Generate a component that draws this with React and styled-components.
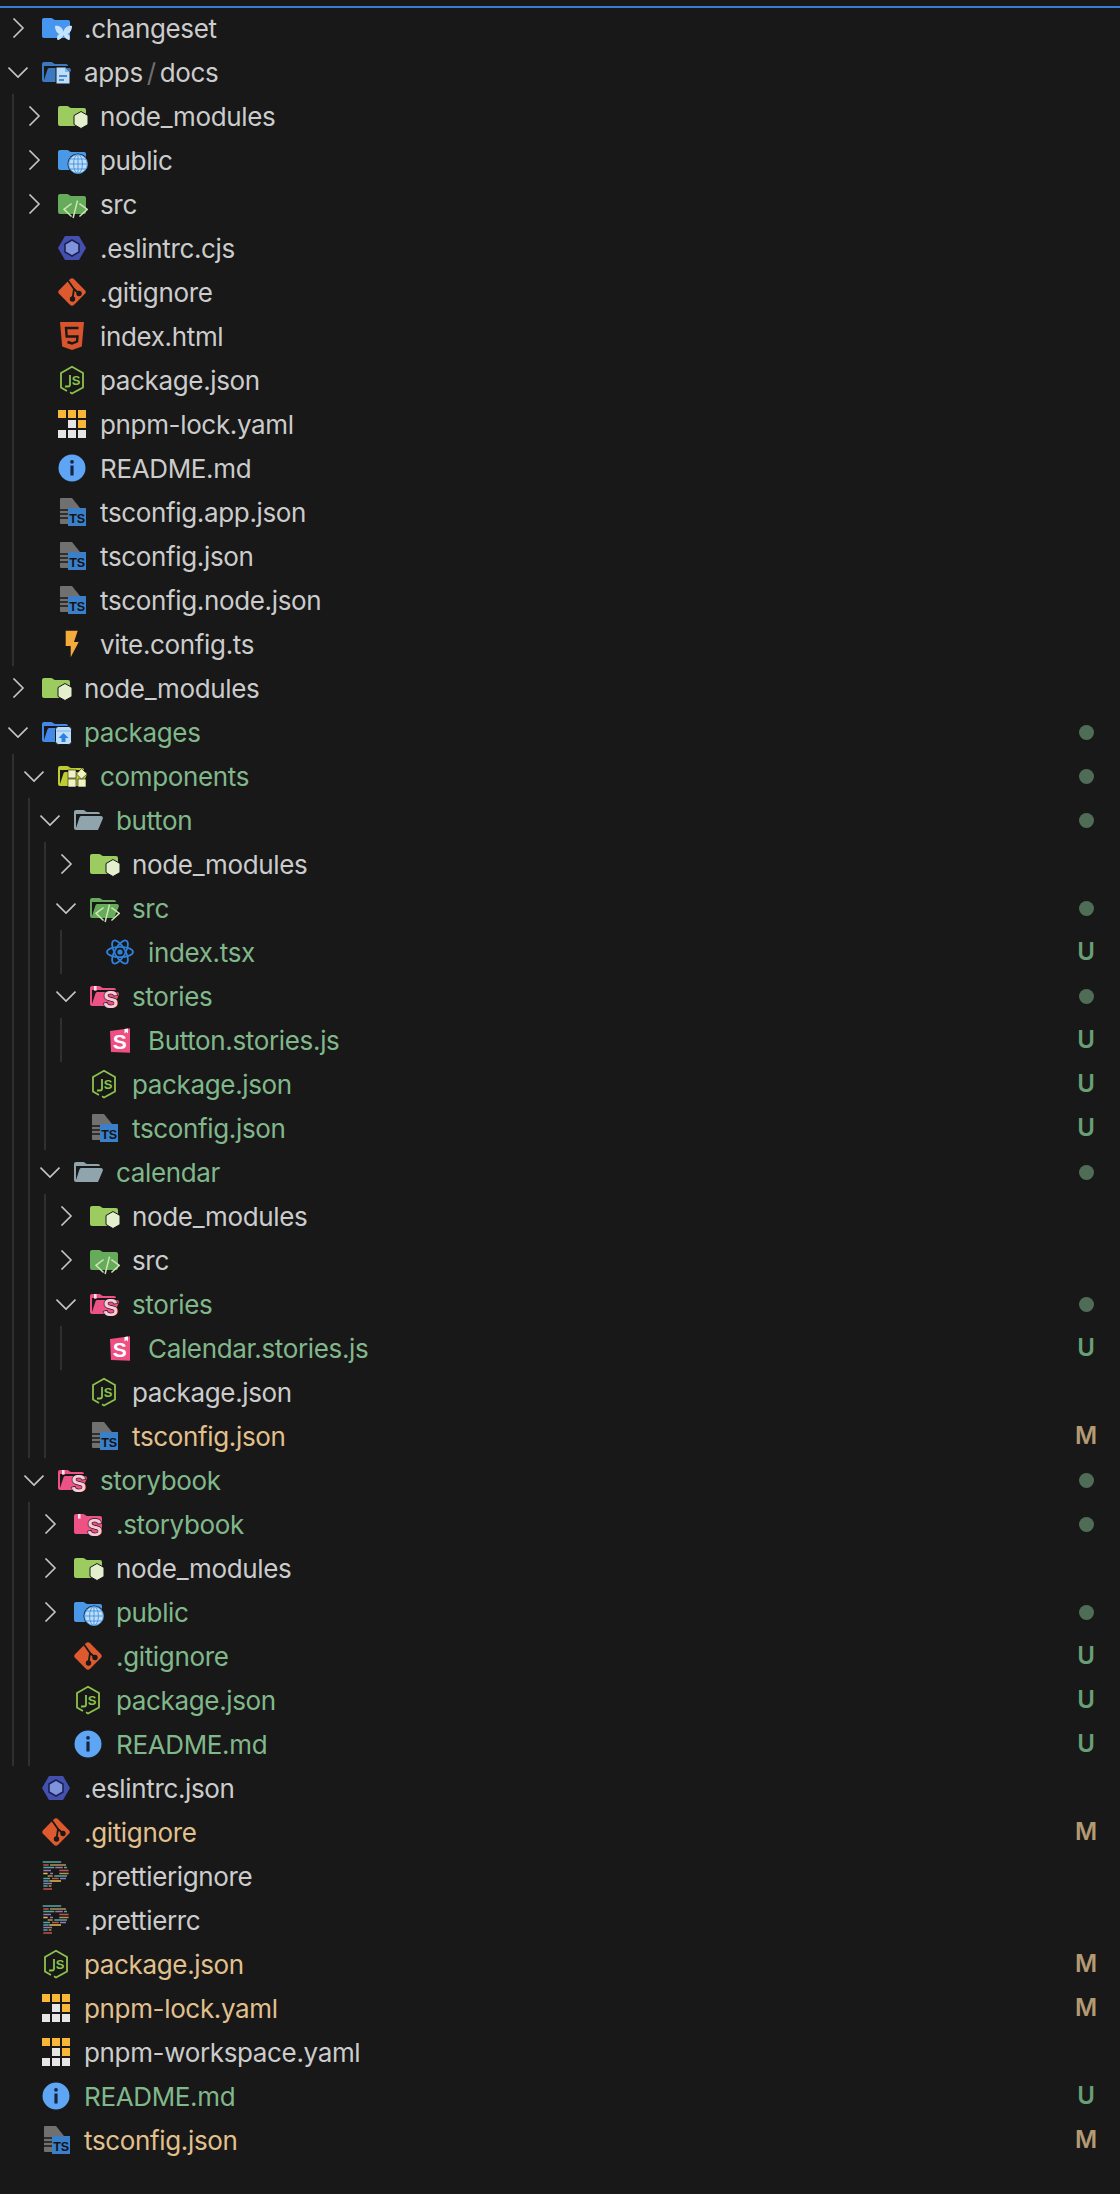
import React from "react";
import styled, { createGlobalStyle } from "styled-components";

const Global = createGlobalStyle`
  html, body { margin: 0; padding: 0; background: #181818; }
  #root { min-height: 2194px; }
`;

const Page = styled.div`
  position: relative;
  width: 1120px;
  min-height: 2194px;
  box-sizing: border-box;
  padding-top: 6px;
  background: #181818;
  font-family: Inter, "Noto Sans", sans-serif;
  font-size: 26px;
  letter-spacing: -0.35px;
  &::before {
    content: "";
    position: absolute;
    left: 0;
    right: 0;
    top: 6px;
    height: 2px;
    background: #3a7dcf;
  }
`;

const Group = styled.div`
  position: relative;
  &::before {
    content: "";
    position: absolute;
    left: ${(p) => 12 + p.$depth * 16}px;
    top: 0;
    bottom: 0;
    width: 2px;
    background: #2f2f2f;
  }
`;

const Row = styled.div`
  display: flex;
  align-items: center;
  height: 44px;
  padding-left: ${(p) => p.$depth * 16}px;
  padding-right: 26px;
`;

const Twistie = styled.span`
  flex: none;
  display: flex;
  align-items: center;
  justify-content: center;
  width: 36px;
  height: 20px;
  margin-right: 4px;
`;

const IconSvg = styled.svg`
  flex: none;
  display: block;
  width: 32px;
  height: 32px;
  margin-right: 12px;
`;

const statusColor = { ok: "#cccccc", U: "#81b88b", M: "#e2c08d" };

const Label = styled.span`
  flex: 1;
  white-space: nowrap;
  color: ${(p) => statusColor[p.$tone]};
`;

const Separator = styled.span`
  display: inline-block;
  margin: 0 4px;
  color: #6f6f6f;
`;

const Slot = styled.span`
  flex: none;
  display: flex;
  align-items: center;
  justify-content: center;
  width: 16px;
`;

const Dot = styled.span`
  width: 15px;
  height: 15px;
  border-radius: 50%;
  background: #4f6d56;
`;

const Letter = styled.span`
  font-size: 24px;
  font-weight: 600;
  line-height: 1;
  letter-spacing: 0;
  color: ${(p) => (p.$kind === "M" ? "#b39a72" : "#689f75")};
`;

const Chevron = ({ open }) => (
  <svg width="20" height="20" viewBox="0 0 20 20" fill="none" stroke="#c5c5c5" strokeWidth="1.6">
    <polyline points={open ? "0.5,5.5 10,15 19.5,5.5" : "5.5,0.5 15,10 5.5,19.5"} />
  </svg>
);

const BG = "#181818";
const FOLDER =
  "M13.844 7.536l-1.288-1.072A2 2 0 0 0 11.276 6H4a2 2 0 0 0-2 2v16a2 2 0 0 0 2 2h24a2 2 0 0 0 2-2V10a2 2 0 0 0-2-2H15.124a2 2 0 0 1-1.28-.464z";
const OPEN =
  "M28.967 12H9.442a2 2 0 0 0-1.898 1.368L4 24V10h24a2 2 0 0 0-2-2H15.124a2 2 0 0 1-1.28-.464l-1.288-1.072A2 2 0 0 0 11.276 6H4a2 2 0 0 0-2 2v16a2 2 0 0 0 2 2h22l4.805-11.212A2 2 0 0 0 28.967 12z";

const Folder = ({ open, color, children }) => (
  <IconSvg viewBox="0 0 32 32">
    <path d={open ? OPEN : FOLDER} fill={color} />
    {children}
  </IconSvg>
);

const Hex = () => <polygon points="25,11.5 32,15.5 32,24.5 25,28.5 18,24.5 18,15.5" fill="#e3efcd" stroke={BG} strokeWidth="1" />;

const Globe = () => (
  <g>
    <circle cx="22" cy="20" r="10.5" fill={BG} />
    <circle cx="22" cy="20" r="9.5" fill="#bbdefb" />
    <g fill="none" stroke="#4a90d9" strokeWidth="0.9">
      <circle cx="22" cy="20" r="9.5" />
      <ellipse cx="22" cy="20" rx="4.4" ry="9.5" />
      <line x1="22" y1="10.5" x2="22" y2="29.5" />
      <line x1="12.5" y1="20" x2="31.5" y2="20" />
      <path d="M14 15h16M14 25h16" />
    </g>
  </g>
);

const Code = () => (
  <path
    d="M15 16l-7 5.3L15 28M24 16l7.300 5.300L24 28M21.300 13.300L17.300 29.300"
    fill="none"
    stroke="#cfe6b4"
    strokeWidth="1.5"
    strokeLinecap="square"
  />
);

const StoryS = () => (
  <g>
    <rect x="6" y="6" width="2.6" height="4.6" fill="#fbe3ea" />
    <text x="22.5" y="28" textAnchor="middle" fontFamily="Liberation Sans, sans-serif" fontWeight="700" fontSize="23" fill="#fbc9d8" stroke={BG} strokeWidth="1.4" paintOrder="stroke">S</text>
  </g>
);

const Changeset = () => (
  <path
    d="M15 14C19 13 23 16 23.500 20C24 16 28 13 32 14C32 18 30 21 27.500 22C30 23 30.500 26 29.500 28C27 28 24.500 25.500 23.500 23C22.500 25.500 20 28 17.500 28C16.500 26 17 23 19.500 22C17 21 15 18 15 14z"
    fill="#c6e2fb"
  />
);

const DocOverlay = () => (
  <g>
    <path d="M16 11h9l5 5v12H16z" fill="#bbdefb" stroke={BG} strokeWidth="1" />
    <path d="M25 11v5h5" fill="#7fb3e6" />
    <path d="M19 20h8M19 24h5" stroke="#2f6fb5" strokeWidth="1.6" />
  </g>
);

const BoxOverlay = () => (
  <g>
    <rect x="15.5" y="10.5" width="16" height="18" rx="3" fill="#bbdefb" stroke={BG} strokeWidth="1" />
    <path d="M16.5 15h14" stroke="#7fb3e6" strokeWidth="1" />
    <path d="M23.5 17l5 5h-3v4h-4v-4h-3z" fill="#2f7fe0" />
  </g>
);

const Blocks = () => (
  <g fill="#f0f4c3" stroke={BG} strokeWidth="0.6">
    <rect x="12" y="10" width="8" height="8" />
    <rect x="12" y="19" width="8" height="8" />
    <rect x="22" y="19" width="8" height="8" />
    <polygon points="25.5,8.5 31,14 25.5,19 20.5,14" />
  </g>
);

const Frame = ({ children }) => <IconSvg viewBox="0 0 32 32">{children}</IconSvg>;

const Eslint = () => (
  <Frame>
    <polygon points="2,16 9,4 23,4 30,16 23,28 9,28" fill="#4350ae" />
    <polygon points="16,8 23,12 23,20 16,24 9,20 9,12" fill="#8094dc" stroke="#1d2156" strokeWidth="1.6" />
  </Frame>
);

const Git = () => (
  <Frame>
    <rect x="5.5" y="5.5" width="21" height="21" rx="3" transform="rotate(45 16 16)" fill="#dd5a2f" />
    <g stroke="#181818" strokeWidth="1.8" fill="none">
      <path d="M12 4.5l6 8.5-1.5 10M18 13l5 4.500" />
    </g>
    <circle cx="16.5" cy="23" r="2.7" fill="#181818" />
    <circle cx="23" cy="17.5" r="2.7" fill="#181818" />
  </Frame>
);

const Html = () => (
  <Frame>
    <path d="M4 2h24l-2.2 24.5L16 30 6.2 26.500z" fill="#d9532c" />
    <path d="M22.500 8H10l.7 8.500h10.800l-.5 5L16 23.500 11.500 22" fill="none" stroke="#181818" strokeWidth="2.4" />
  </Frame>
);

const Node = () => (
  <Frame>
    <path d="M11 27L5 23.500V9l11-6.200L27 9v14.500L16 29.500l-2-1.200" fill="none" stroke="#8bc34a" strokeWidth="1.8" />
    <path d="M14 11v9.500a2 2 0 0 1-2 2H9" fill="none" stroke="#8bc34a" strokeWidth="1.800" />
    <text x="20" y="21" textAnchor="middle" fontFamily="Liberation Sans, sans-serif" fontWeight="700" fontSize="13" fill="#8bc34a">S</text>
  </Frame>
);

const Pnpm = () => {
  const o = "#f9b73a";
  const w = "#e6e6e6";
  const cells = [
    [2, 2, o], [12, 2, o], [22, 2, o],
    [12, 12, w], [22, 12, o],
    [2, 22, w], [12, 22, w], [22, 22, w],
  ];
  return (
    <Frame>
      {cells.map(([x, y, c]) => (
        <rect key={`${x}-${y}`} x={x} y={y} width="8" height="8" fill={c} />
      ))}
    </Frame>
  );
};

const Info = () => (
  <Frame>
    <circle cx="16" cy="16" r="13.500" fill="#5ea5f5" />
    <circle cx="16" cy="9.800" r="1.900" fill="#14263f" />
    <rect x="14.400" y="13.500" width="3.200" height="10" fill="#14263f" />
  </Frame>
);

const TsConfig = () => (
  <Frame>
    <path d="M5 2h11l8 10v16H5a1 1 0 0 1-1-1V3a1 1 0 0 1 1-1z" fill="#707070" />
    <path d="M4 14h8M4 18h8M4 22h8" stroke="#181818" strokeWidth="1.500" />
    <rect x="12" y="12" width="18" height="18" fill="#3a7fc8" />
    <text x="21" y="26.500" textAnchor="middle" fontFamily="Liberation Sans, sans-serif" fontWeight="700" fontSize="12.500" fill="#10141a">TS</text>
  </Frame>
);

const Vite = () => (
  <Frame>
    <polygon points="9.700,2.700 21.700,2.700 18,14 22.700,14 14.700,29.300 14.700,18 9.700,18" fill="#f5ab3c" />
  </Frame>
);

const ReactIcon = () => (
  <Frame>
    <g fill="none" stroke="#2f80d8" strokeWidth="1.800">
      <ellipse cx="16" cy="16" rx="13" ry="5.200" />
      <ellipse cx="16" cy="16" rx="13" ry="5.200" transform="rotate(60 16 16)" />
      <ellipse cx="16" cy="16" rx="13" ry="5.200" transform="rotate(120 16 16)" />
    </g>
    <circle cx="16" cy="16" r="2.600" fill="#2f80d8" />
  </Frame>
);

const StoryFile = () => (
  <Frame>
    <polygon points="6,7 26,4.300 26,28.700 7,28" fill="#ef4f82" />
    <polygon points="20.500,5 24,4.500 24,9.500 22.300,8 20.500,9.500" fill="#fff" />
    <text x="15.500" y="25" textAnchor="middle" fontFamily="Liberation Sans, sans-serif" fontWeight="700" fontSize="21" fill="#fff">S</text>
  </Frame>
);

const teal = "#56a5a5";
const red = "#c45050";
const tan = "#b39450";
const pur = "#9678b2";
const yel = "#e0c050";
const bars = [
  [2, [[2.7, 18.500, teal]]],
  [5, [[3.300, 5.400, red], [10, 16, tan]]],
  [7.500, [[3.300, 11, teal], [15.300, 7.500, pur], [24, 3, teal]]],
  [10.500, [[3.300, 7.700, pur], [19.300, 9.300, red]]],
  [13.500, [[3.300, 4.300, yel], [10, 3, pur], [19.300, 9.300, tan]]],
  [16, [[7.700, 5, tan], [14.300, 12.700, teal]]],
  [18.500, [[3.300, 6.700, teal], [12, 6.700, red], [20, 6, pur]]],
  [21, [[3.300, 5.400, teal], [9.300, 11.700, yel]]],
  [23.500, [[3.300, 8.700, pur]]],
  [26, [[3.300, 4.300, teal], [8.700, 2.700, tan]]],
  [29, [[3.300, 8.700, red]]],
];

const Prettier = () => (
  <Frame>
    {bars.map(([y, parts]) =>
      parts.map(([x, w, c]) => <rect key={`${y}-${x}`} x={x} y={y - 0.75} width={w} height="1.500" fill={c} />)
    )}
  </Frame>
);

const Icons = {
  changeset: () => <Folder color="#4696ef"><Changeset /></Folder>,
  docs: () => <Folder open color="#3b79c0"><DocOverlay /></Folder>,
  node: () => <Folder color="#9ccb5f"><Hex /></Folder>,
  publicDir: () => <Folder color="#4a98e8"><Globe /></Folder>,
  src: () => <Folder color="#66ab5c"><Code /></Folder>,
  srcOpen: () => <Folder open color="#66ab5c"><Code /></Folder>,
  packages: () => <Folder open color="#4488e8"><BoxOverlay /></Folder>,
  components: () => <Folder open color="#c0ca33"><Blocks /></Folder>,
  plainOpen: () => <Folder open color="#90a4ae" />,
  storiesOpen: () => <Folder open color="#ec5285"><StoryS /></Folder>,
  stories: () => <Folder color="#ee5285"><StoryS /></Folder>,
  eslint: Eslint,
  git: Git,
  html: Html,
  pkg: Node,
  pnpm: Pnpm,
  info: Info,
  ts: TsConfig,
  vite: Vite,
  react: ReactIcon,
  story: StoryFile,
  prettier: Prettier,
};

const file = (name, icon, tone = "ok", badge) => ({ name, icon, tone, badge });
const dir = (name, icon, tone = "ok", badge, children) => ({ name, icon, tone, badge, children, isDir: true });

const tree = [
  dir(".changeset", "changeset"),
  dir(["apps", "docs"], "docs", "ok", undefined, [
    dir("node_modules", "node"),
    dir("public", "publicDir"),
    dir("src", "src"),
    file(".eslintrc.cjs", "eslint"),
    file(".gitignore", "git"),
    file("index.html", "html"),
    file("package.json", "pkg"),
    file("pnpm-lock.yaml", "pnpm"),
    file("README.md", "info"),
    file("tsconfig.app.json", "ts"),
    file("tsconfig.json", "ts"),
    file("tsconfig.node.json", "ts"),
    file("vite.config.ts", "vite"),
  ]),
  dir("node_modules", "node"),
  dir("packages", "packages", "U", "dot", [
    dir("components", "components", "U", "dot", [
      dir("button", "plainOpen", "U", "dot", [
        dir("node_modules", "node"),
        dir("src", "srcOpen", "U", "dot", [file("index.tsx", "react", "U", "U")]),
        dir("stories", "storiesOpen", "U", "dot", [file("Button.stories.js", "story", "U", "U")]),
        file("package.json", "pkg", "U", "U"),
        file("tsconfig.json", "ts", "U", "U"),
      ]),
      dir("calendar", "plainOpen", "U", "dot", [
        dir("node_modules", "node"),
        dir("src", "src"),
        dir("stories", "storiesOpen", "U", "dot", [file("Calendar.stories.js", "story", "U", "U")]),
        file("package.json", "pkg"),
        file("tsconfig.json", "ts", "M", "M"),
      ]),
    ]),
    dir("storybook", "storiesOpen", "U", "dot", [
      dir(".storybook", "stories", "U", "dot"),
      dir("node_modules", "node"),
      dir("public", "publicDir", "U", "dot"),
      file(".gitignore", "git", "U", "U"),
      file("package.json", "pkg", "U", "U"),
      file("README.md", "info", "U", "U"),
    ]),
  ]),
  file(".eslintrc.json", "eslint"),
  file(".gitignore", "git", "M", "M"),
  file(".prettierignore", "prettier"),
  file(".prettierrc", "prettier"),
  file("package.json", "pkg", "M", "M"),
  file("pnpm-lock.yaml", "pnpm", "M", "M"),
  file("pnpm-workspace.yaml", "pnpm"),
  file("README.md", "info", "U", "U"),
  file("tsconfig.json", "ts", "M", "M"),
];

const TreeNode = ({ item, depth }) => {
  const Icon = Icons[item.icon];
  const open = Boolean(item.children);
  return (
    <>
      <Row $depth={depth}>
        <Twistie>{item.isDir && <Chevron open={open} />}</Twistie>
        <Icon />
        <Label $tone={item.tone}>
          {Array.isArray(item.name) ? (
            <>
              {item.name[0]}
              <Separator>/</Separator>
              {item.name[1]}
            </>
          ) : (
            item.name
          )}
        </Label>
        <Slot>{item.badge === "dot" ? <Dot /> : item.badge ? <Letter $kind={item.badge}>{item.badge}</Letter> : null}</Slot>
      </Row>
      {open && (
        <Group $depth={depth}>
          {item.children.map((c, i) => (
            <TreeNode key={i} item={c} depth={depth + 1} />
          ))}
        </Group>
      )}
    </>
  );
};

export default function App() {
  return (
    <>
      <Global />
      <Page>
        {tree.map((item, i) => (
          <TreeNode key={i} item={item} depth={0} />
        ))}
      </Page>
    </>
  );
}
